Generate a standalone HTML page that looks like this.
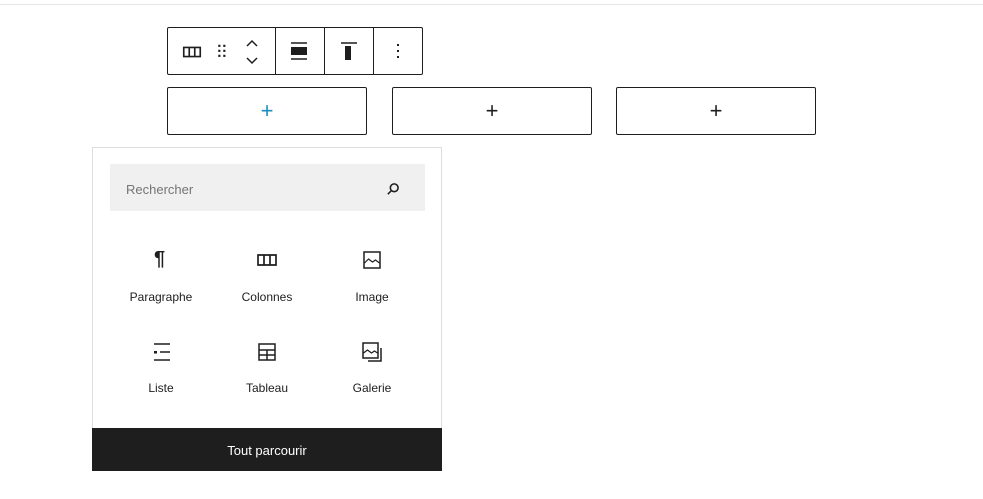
<!DOCTYPE html><html><head><style>
body{margin:0;width:983px;height:499px;background:#fff;position:relative;font-family:"Liberation Sans",sans-serif;overflow:hidden}
.a{position:absolute}
.tb{left:167px;top:27px;width:254px;height:46px;border:1px solid #1e1e1e;border-radius:2px}
.dv{top:0;width:1px;height:46px;background:#1e1e1e}
.bt{top:87px;width:198px;height:46px;border:1px solid #1e1e1e;border-radius:2px;text-align:center;line-height:46px;font-size:22px;color:#1e1e1e}
.pn{left:92px;top:147px;width:348px;height:323px;border:1px solid #ddd;border-bottom:none}
.lb{font-size:12px;color:#1e1e1e;width:100px;text-align:center}
svg{position:absolute}
</style></head><body>
<div class="a" style="left:0;top:4px;width:983px;height:1px;background:#e6e6e6"></div>
<div class="a tb">
<svg style="left:13px;top:13px" width="22" height="22" viewBox="0 0 24 24"><path d="M3 7h18v10H3z M9 7v10 M15 7v10" fill="none" stroke="#1e1e1e" stroke-width="1.8"/></svg>
<svg style="left:44px;top:13px" width="20" height="20" viewBox="0 0 24 24"><g fill="#1e1e1e"><rect x="7.5" y="4.5" width="2.6" height="2.6"/><rect x="13.5" y="4.5" width="2.6" height="2.6"/><rect x="7.5" y="10.5" width="2.6" height="2.6"/><rect x="13.5" y="10.5" width="2.6" height="2.6"/><rect x="7.5" y="16.5" width="2.6" height="2.6"/><rect x="13.5" y="16.5" width="2.6" height="2.6"/></g></svg>
<svg style="left:76px;top:10px" width="16" height="28" viewBox="0 0 16 28"><path d="M3 8l5-5 5 5 M3 20l5 5 5-5" fill="none" stroke="#1e1e1e" stroke-width="1.5"/></svg>
<div class="a dv" style="left:107px"></div>
<svg style="left:121px;top:13px" width="20" height="20" viewBox="0 0 20 20"><path d="M2 2h16M2 18h16" stroke="#1e1e1e" stroke-width="1.5"/><rect x="2" y="6" width="16" height="8" fill="#1e1e1e"/></svg>
<div class="a dv" style="left:156px"></div>
<svg style="left:171px;top:13px" width="20" height="20" viewBox="0 0 20 20"><path d="M2 2h16" stroke="#1e1e1e" stroke-width="1.5"/><rect x="6" y="5" width="6" height="14" fill="#1e1e1e"/></svg>
<div class="a dv" style="left:205px"></div>
<svg style="left:220px;top:13px" width="20" height="20" viewBox="0 0 20 20"><g fill="#1e1e1e"><rect x="9" y="3" width="2" height="2"/><rect x="9" y="9" width="2" height="2"/><rect x="9" y="15" width="2" height="2"/></g></svg>
</div>
<div class="a bt" style="left:167px;color:#1e8cbe">+</div>
<div class="a bt" style="left:392px">+</div>
<div class="a bt" style="left:616px">+</div>
<div class="a pn"></div>
<div class="a" style="left:110px;top:164px;width:315px;height:47px;background:#f0f0f0"></div>
<div class="a" style="left:126px;top:182px;font-size:13px;color:#757575">Rechercher</div>
<svg style="left:385px;top:180px" width="17" height="17" viewBox="0 0 24 24"><circle cx="13" cy="11" r="5.5" fill="none" stroke="#1e1e1e" stroke-width="2.2"/><path d="M9 15l-5 5" stroke="#1e1e1e" stroke-width="2.2"/></svg>
<div class="a" style="left:154px;top:248px;font-size:20px;font-weight:bold;color:#1e1e1e">¶</div>
<svg style="left:255px;top:248px" width="24" height="24" viewBox="0 0 24 24"><path d="M3 7h18v10H3z M9 7v10 M15 7v10" fill="none" stroke="#1e1e1e" stroke-width="1.7"/></svg>
<svg style="left:360px;top:248px" width="24" height="24" viewBox="0 0 24 24"><rect x="4" y="4" width="16" height="16" fill="none" stroke="#1e1e1e" stroke-width="1.5"/><path d="M4.5 15l4-4 4 3 3-2 4 3" fill="none" stroke="#1e1e1e" stroke-width="1.2"/></svg>
<div class="a lb" style="left:111px;top:290px">Paragraphe</div>
<div class="a lb" style="left:217px;top:290px">Colonnes</div>
<div class="a lb" style="left:322px;top:290px">Image</div>
<svg style="left:150px;top:340px" width="24" height="24" viewBox="0 0 24 24"><path d="M4 4h16M10 12h10M4 20h16" stroke="#1e1e1e" stroke-width="1.5"/><rect x="4" y="11" width="3" height="2.5" fill="#1e1e1e"/></svg>
<svg style="left:255px;top:340px" width="24" height="24" viewBox="0 0 24 24"><path d="M4 4h16v16H4z M4 10h16 M4 15h16 M12 10v10" fill="none" stroke="#1e1e1e" stroke-width="1.5"/></svg>
<svg style="left:360px;top:340px" width="24" height="24" viewBox="0 0 24 24"><rect x="3" y="3" width="15" height="15" fill="none" stroke="#1e1e1e" stroke-width="1.5"/><path d="M3.5 13l4-3 4 3 3-2 3 2" fill="none" stroke="#1e1e1e" stroke-width="1.2"/><path d="M21 8v13H8" fill="none" stroke="#1e1e1e" stroke-width="1.5"/></svg>
<div class="a lb" style="left:111px;top:381px">Liste</div>
<div class="a lb" style="left:217px;top:381px">Tableau</div>
<div class="a lb" style="left:322px;top:381px">Galerie</div>
<div class="a" style="left:92px;top:428px;width:350px;height:43px;background:#1e1e1e;color:#fff;font-size:13px;text-align:center;line-height:45px">Tout parcourir</div>
</body></html>
